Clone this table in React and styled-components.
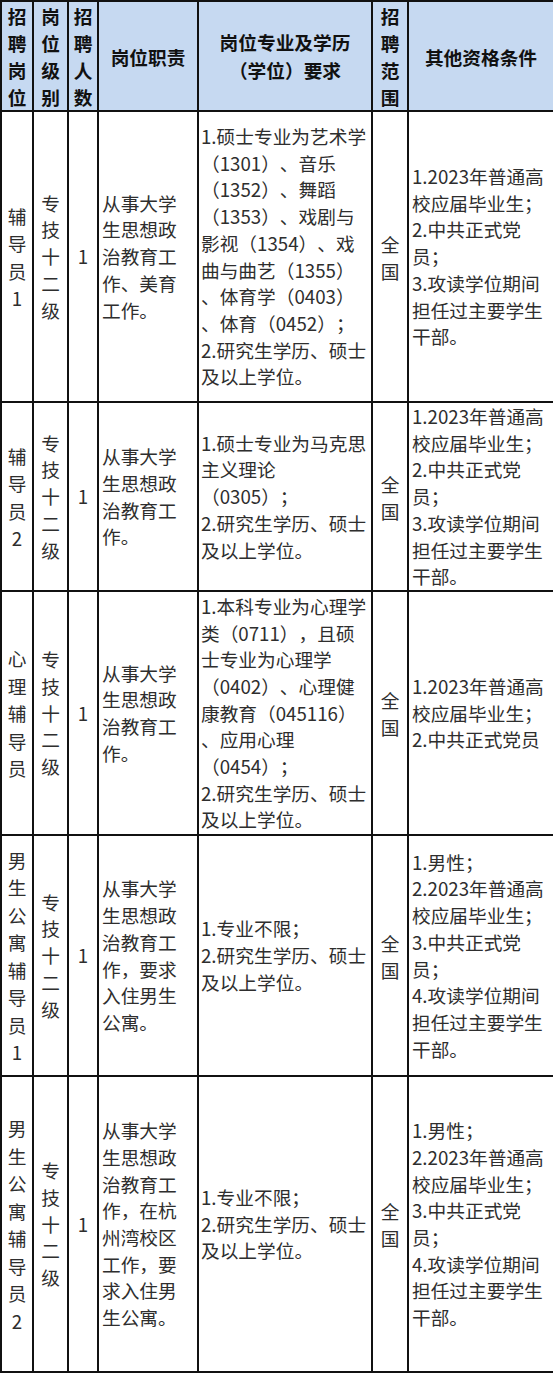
import React from 'react';
import styled, { createGlobalStyle } from 'styled-components';

const GlobalStyle = createGlobalStyle`
  html, body {
    margin: 0;
    padding: 0;
    background: #ffffff;
  }

  body {
    font-family: 'Noto Sans CJK SC', 'Noto Sans', sans-serif;
  }
`;

const Table = styled.table`
  width: 553px;
  table-layout: fixed;
  border-collapse: collapse;
  font-size: 18.7px;
  line-height: 26.7px;
  color: #2e2e2e;
  text-spacing-trim: space-all;
  font-kerning: none;
`;

const HeadCell = styled.th`
  height: ${({ $h }) => $h}px;
  padding: 0;
  background: #c6d9f1;
  border: 2px solid #111111;
  color: #111111;
  font-weight: 700;
  line-height: 27px;
  text-align: center;
  vertical-align: middle;
`;

const Cell = styled.td`
  height: ${({ $h }) => $h}px;
  padding: ${({ $pad }) => ($pad ? `0 0 0 ${$pad}px` : '0')};
  border: 2px solid #111111;
  text-align: ${({ $align }) => $align || 'center'};
  vertical-align: middle;
  white-space: nowrap;
  overflow: hidden;
`;

const Lines = styled.div`
  display: flex;
  flex-direction: column;
  align-items: ${({ $align }) => ($align === 'left' ? 'flex-start' : 'center')};
  line-height: ${({ $lh }) => $lh || 26.7}px;
`;

const columns = [32, 35, 30, 100, 174, 36, 146];

const detailed = [
  '1.2023年普通高',
  '校应届毕业生；',
  '2.中共正式党',
  '员；',
  '3.攻读学位期间',
  '担任过主要学生',
  '干部。',
];

const dormOther = [
  '1.男性；',
  '2.2023年普通高',
  '校应届毕业生；',
  '3.中共正式党',
  '员；',
  '4.攻读学位期间',
  '担任过主要学生',
  '干部。',
];

const openMajor = ['1.专业不限；', '2.研究生学历、硕士', '及以上学位。'];

const rows = [
  {
    h: 289,
    post: '辅导员1',
    duty: ['从事大学', '生思想政', '治教育工', '作、美育', '工作。'],
    major: [
      '1.硕士专业为艺术学',
      '（1301）、音乐',
      '（1352）、舞蹈',
      '（1353）、戏剧与',
      '影视（1354）、戏',
      '曲与曲艺（1355）',
      '、体育学（0403）',
      '、体育（0452）；',
      '2.研究生学历、硕士',
      '及以上学位。',
    ],
    other: detailed,
  },
  {
    h: 187,
    post: '辅导员2',
    duty: ['从事大学', '生思想政', '治教育工', '作。'],
    major: [
      '1.硕士专业为马克思',
      '主义理论',
      '（0305）；',
      '2.研究生学历、硕士',
      '及以上学位。',
    ],
    other: detailed,
  },
  {
    h: 242,
    post: '心理辅导员',
    duty: ['从事大学', '生思想政', '治教育工', '作。'],
    major: [
      '1.本科专业为心理学',
      '类（0711），且硕',
      '士专业为心理学',
      '（0402）、心理健',
      '康教育（045116）',
      '、应用心理',
      '（0454）；',
      '2.研究生学历、硕士',
      '及以上学位。',
    ],
    other: ['1.2023年普通高', '校应届毕业生；', '2.中共正式党员'],
  },
  {
    h: 239,
    post: '男生公寓辅导员1',
    duty: ['从事大学', '生思想政', '治教育工', '作，要求', '入住男生', '公寓。'],
    major: openMajor,
    other: dormOther,
  },
  {
    h: 294,
    post: '男生公寓辅导员2',
    duty: [
      '从事大学',
      '生思想政',
      '治教育工',
      '作，在杭',
      '州湾校区',
      '工作，要',
      '求入住男',
      '生公寓。',
    ],
    major: openMajor,
    other: dormOther,
  },
];

function Stack({ lines, align, lh }) {
  return (
    <Lines $align={align} $lh={lh}>
      {lines.map((line, i) => (
        <span key={i}>{line}</span>
      ))}
    </Lines>
  );
}

export default function App() {
  return (
    <>
      <GlobalStyle />
      <Table>
        <colgroup>
          {columns.map((w, i) => (
            <col key={i} style={{ width: w }} />
          ))}
        </colgroup>
        <thead>
          <tr>
            <HeadCell $h={107}>
              <Stack lines={[...'招聘岗位']} lh={27} />
            </HeadCell>
            <HeadCell>
              <Stack lines={[...'岗位级别']} lh={27} />
            </HeadCell>
            <HeadCell>
              <Stack lines={[...'招聘人数']} lh={27} />
            </HeadCell>
            <HeadCell>岗位职责</HeadCell>
            <HeadCell>
              <Stack lines={['岗位专业及学历', '（学位）要求']} lh={28} />
            </HeadCell>
            <HeadCell>
              <Stack lines={[...'招聘范围']} lh={27} />
            </HeadCell>
            <HeadCell>其他资格条件</HeadCell>
          </tr>
        </thead>
        <tbody>
          {rows.map((row, i) => (
            <tr key={i}>
              <Cell $h={row.h}>
                <Stack lines={[...row.post]} lh={27.5} />
              </Cell>
              <Cell>
                <Stack lines={[...'专技十二级']} />
              </Cell>
              <Cell>1</Cell>
              <Cell $align="left" $pad={3}>
                <Stack lines={row.duty} align="left" />
              </Cell>
              <Cell $align="left" $pad={2}>
                <Stack lines={row.major} align="left" />
              </Cell>
              <Cell>
                <Stack lines={['全', '国']} lh={27} />
              </Cell>
              <Cell $align="left" $pad={3}>
                <Stack lines={row.other} align="left" />
              </Cell>
            </tr>
          ))}
        </tbody>
      </Table>
    </>
  );
}
